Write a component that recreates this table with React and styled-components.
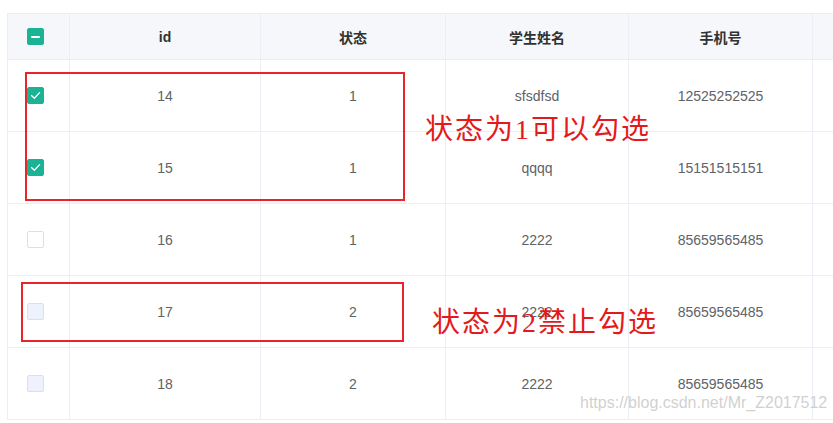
import React from "react";
import styled, { createGlobalStyle } from "styled-components";

const GlobalStyle = createGlobalStyle`
  html, body {
    margin: 0;
    padding: 0;
    background: #fff;
    overflow: hidden;
  }
  body {
    font-family: "Liberation Sans", Arial, "Noto Sans CJK SC", sans-serif;
  }
`;

const COLS = "62px 191px 185px 183px 184px 40px";

const rows = [
  { id: 14, status: 1, name: "sfsdfsd", phone: "12525252525", checked: true },
  { id: 15, status: 1, name: "qqqq", phone: "15151515151", checked: true },
  { id: 16, status: 1, name: "2222", phone: "85659565485", checked: false },
  { id: 17, status: 2, name: "2222", phone: "85659565485", checked: false },
  { id: 18, status: 2, name: "2222", phone: "85659565485", checked: false }
];

const Page = styled.div`
  position: relative;
  width: 833px;
  height: 423px;
  padding: 13px 0 0 7px;
  box-sizing: border-box;
  overflow: hidden;
`;

const Table = styled.div`
  display: flex;
  flex-direction: column;
  border-left: 1px solid #ebeef5;
  border-top: 1px solid #ebeef5;
  width: 850px;
`;

const Row = styled.div`
  display: grid;
  grid-template-columns: ${COLS};
  height: ${p => (p.$head ? "46px" : "72px")};
  background: ${p => (p.$head ? "#f5f7fa" : "#fff")};
`;

const Cell = styled.div`
  display: flex;
  align-items: center;
  justify-content: center;
  border-right: 1px solid #ebeef5;
  border-bottom: 1px solid #ebeef5;
  font-size: 14px;
  color: ${p => (p.$head ? "#303133" : "#606266")};
  font-weight: ${p => (p.$head ? 700 : 400)};
  font-family: "Liberation Sans", Arial, "Noto Sans CJK SC", sans-serif;
  box-sizing: border-box;
`;

const CheckCell = styled(Cell)`
  justify-content: flex-start;
  padding-left: 19px;
`;

const Box = styled.span`
  display: inline-flex;
  align-items: center;
  justify-content: center;
  width: 17px;
  height: 17px;
  box-sizing: border-box;
  border-radius: 2px;
  border: 1px solid ${p => (p.$on ? "#1ab394" : "#dcdfe6")};
  background: ${p =>
    p.$on ? "#1ab394" : p.$disabled ? "#edf2fc" : "#fff"};
`;

const Dash = styled.span`
  width: 9px;
  height: 2px;
  background: #fff;
  border-radius: 1px;
`;

const Check = () => (
  <svg width="11" height="9" viewBox="0 0 11 9">
    <path
      d="M1.5 4.6 L4.3 7.2 L9.6 1.6"
      fill="none"
      stroke="#fff"
      strokeWidth="1.3"
      strokeLinecap="round"
      strokeLinejoin="round"
    />
  </svg>
);

const Mark = styled.div`
  position: absolute;
  border: 2px solid #e8262a;
  box-sizing: border-box;
  left: ${p => p.$x}px;
  top: ${p => p.$y}px;
  width: ${p => p.$w}px;
  height: ${p => p.$h}px;
`;

const Note = styled.div`
  position: absolute;
  left: ${p => p.$x}px;
  top: ${p => p.$y}px;
  color: #e31a1c;
  font-size: 28px;
  line-height: 30px;
  letter-spacing: 2px;
  font-family: "Liberation Serif", "Noto Sans CJK SC", serif;
  white-space: nowrap;
`;

const Watermark = styled.div`
  position: absolute;
  left: 580px;
  top: 394px;
  color: rgba(200, 200, 200, 0.85);
  font-size: 16px;
  font-family: "Liberation Sans", Arial, sans-serif;
  white-space: nowrap;
`;

export default function App() {
  return (
    <Page>
      <GlobalStyle />
      <Table>
        <Row $head>
          <CheckCell $head>
            <Box $on>
              <Dash />
            </Box>
          </CheckCell>
          <Cell $head>id</Cell>
          <Cell $head>状态</Cell>
          <Cell $head>学生姓名</Cell>
          <Cell $head>手机号</Cell>
          <Cell $head />
        </Row>
        {rows.map(r => (
          <Row key={r.id}>
            <CheckCell>
              <Box $on={r.checked} $disabled={r.status === 2}>
                {r.checked && <Check />}
              </Box>
            </CheckCell>
            <Cell>{r.id}</Cell>
            <Cell>{r.status}</Cell>
            <Cell>{r.name}</Cell>
            <Cell>{r.phone}</Cell>
            <Cell />
          </Row>
        ))}
      </Table>

      <Mark $x={25} $y={72} $w={380} $h={129} />
      <Mark $x={21} $y={282} $w={383} $h={60} />
      <Note $x={425} $y={115}>状态为1可以勾选</Note>
      <Note $x={432} $y={308}>状态为2禁止勾选</Note>
      <Watermark>https://blog.csdn.net/Mr_Z2017512</Watermark>
    </Page>
  );
}
